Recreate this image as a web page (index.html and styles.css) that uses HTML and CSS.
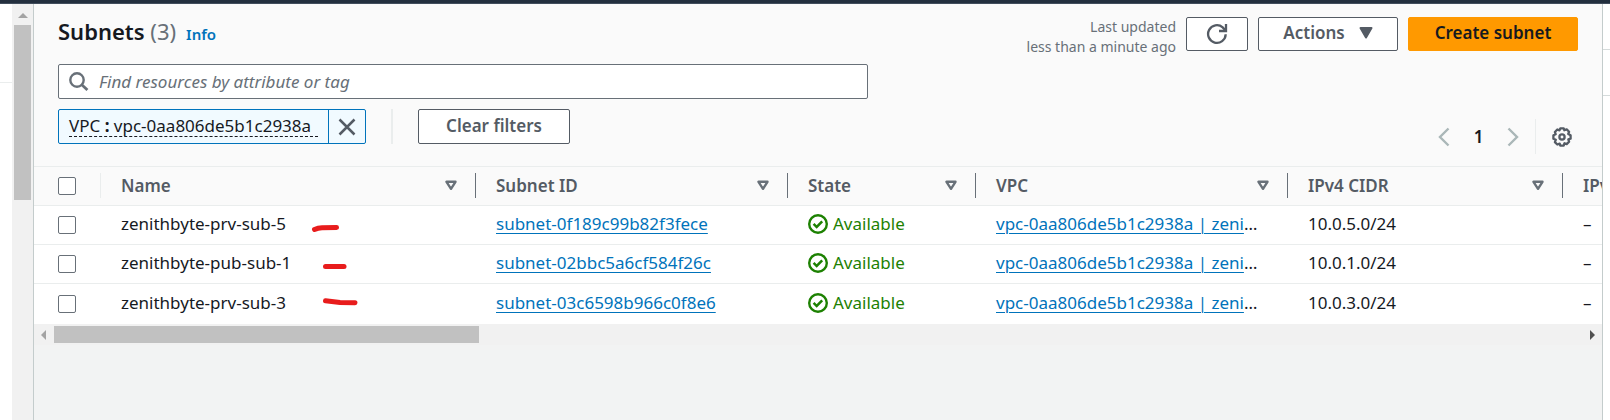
FILE: index.html
```html
<!DOCTYPE html>
<html lang="en">
<head>
<meta charset="utf-8">
<title>Subnets</title>
<link rel="stylesheet" href="styles.css">
</head>
<body>
<svg class="defs" aria-hidden="true">
  <symbol id="sort" viewBox="0 0 12 11"><path d="M1.500 1.800h9L6 8.800z" fill="none" stroke="currentColor" stroke-width="2.400" stroke-linejoin="round"/></symbol>
  <symbol id="ok" viewBox="0 0 20 20"><circle cx="10" cy="10" r="8.800" fill="none" stroke="currentColor" stroke-width="2.400"/><path d="M5.600 9.800l3.100 3.200 5.500-5.600" fill="none" stroke="currentColor" stroke-width="2.500"/></symbol>
</svg>
<div class="topbar"></div>
<div class="frame">
  <div class="left-page">
    <div class="left-strip"></div>
    <div class="vscroll">
      <svg class="arrow-up" viewBox="0 0 10 5"><path d="M0 5L5 0l5 5z"/></svg>
      <div class="vthumb"></div>
    </div>
  </div>
  <main class="panel">
    <header class="head">
      <div class="title-row">
        <h1 class="title">Subnets <span class="count">(3)</span></h1>
        <a class="info" href="#">Info</a>
        <div class="actions">
          <p class="updated">Last updated<br>less than a minute ago</p>
          <button class="btn btn-icon" aria-label="Refresh">
            <svg width="22" height="22" viewBox="0 0 22 22" fill="none" stroke="currentColor" stroke-width="2.300"><path d="M19.700 11.300a8.800 8.800 0 1 1-3-6.900l2.500 2.700"/><path d="M20 1v7h-7"/></svg>
          </button>
          <button class="btn btn-menu">Actions <svg width="14" height="12" viewBox="0 0 14 12"><path d="M1.500 1h11L7 10.500z" fill="currentColor" stroke="currentColor" stroke-width="2" stroke-linejoin="round"/></svg></button>
          <button class="btn btn-primary">Create subnet</button>
        </div>
      </div>
      <label class="search">
        <svg width="20" height="20" viewBox="0 0 20 20" fill="none" stroke="currentColor" stroke-width="2.400"><circle cx="8" cy="8" r="6.700"/><path d="M12.800 12.800l5.600 5.300" stroke-width="2.800"/></svg>
        <input type="text" aria-label="Find resources" placeholder="Find resources by attribute or tag">
      </label>
      <div class="filter-row">
        <div class="token">
          <button class="token-text"><span>VPC <b>:</b> vpc-0aa806de5b1c2938a</span></button>
          <button class="token-close" aria-label="Remove filter"><svg width="18" height="18" viewBox="0 0 18 18" fill="none" stroke="currentColor" stroke-width="2.500"><path d="M1.500 1.500l15 15M16.500 1.500l-15 15"/></svg></button>
        </div>
        <div class="split"></div>
        <button class="btn btn-clear">Clear filters</button>
        <nav class="pages" aria-label="Pages">
          <button class="plain page-arrow" aria-label="Previous page"><svg width="12" height="20" viewBox="0 0 12 20" fill="none" stroke="currentColor" stroke-width="2.400"><path d="M10.500 1.500L2 10l8.500 8.500"/></svg></button>
          <button class="plain page-number">1</button>
          <button class="plain page-arrow" aria-label="Next page"><svg width="12" height="20" viewBox="0 0 12 20" fill="none" stroke="currentColor" stroke-width="2.400"><path d="M1.500 1.500L10 10l-8.500 8.500"/></svg></button>
          <div class="rule"></div>
          <button class="plain gear" aria-label="Preferences"><svg width="20" height="20" viewBox="0 0 20 20" fill="none" stroke="currentColor" stroke-width="2.300" stroke-linejoin="round"><path d="M8.300 1.300h3.400l.6 1.900 2.400-.8 2.400 2.400-.9 2.200 2.400 1.300v3.400l-2.300.6.8 2.400-2.400 2.400-2.200-.9-.8 2.400H8.300l-.6-2-2.400.9-2.400-2.400.9-2.300-2.400-1V8.300l2.300-1-.8-2.300 2.400-2.500 2.200.9z"/><circle cx="10" cy="10" r="2.600"/></svg></button>
        </nav>
      </div>
    </header>
    <div class="table-wrap">
      <table class="grid">
        <colgroup><col class="c-check"><col class="c-name"><col class="c-id"><col class="c-state"><col class="c-vpc"><col class="c-v4"><col class="c-v6"></colgroup>
        <thead>
          <tr>
            <th><div class="th th-check"><input type="checkbox" aria-label="Select all"></div></th>
            <th><div class="th">Name<svg class="sort"><use href="#sort"/></svg></div></th>
            <th><div class="th">Subnet ID<svg class="sort"><use href="#sort"/></svg></div></th>
            <th><div class="th">State<svg class="sort"><use href="#sort"/></svg></div></th>
            <th><div class="th">VPC<svg class="sort"><use href="#sort"/></svg></div></th>
            <th><div class="th">IPv4 CIDR<svg class="sort"><use href="#sort"/></svg></div></th>
            <th><div class="th">IPv6</div></th>
          </tr>
        </thead>
        <tbody>
          <tr>
            <td><input type="checkbox" aria-label="Select zenithbyte-prv-sub-5"></td>
            <td>zenithbyte-prv-sub-5<svg class="mark" viewBox="0 0 60 20"><path d="M7.500 11.500Q11 9.800 15 9.700L29.500 9.400"/></svg></td>
            <td><a href="#">subnet-0f189c99b82f3fece</a></td>
            <td><span class="state"><svg><use href="#ok"/></svg>Available</span></td>
            <td><a href="#">vpc-0aa806de5b1c2938a | zeni</a>…</td>
            <td>10.0.5.0/24</td>
            <td>–</td>
          </tr>
          <tr>
            <td><input type="checkbox" aria-label="Select zenithbyte-pub-sub-1"></td>
            <td>zenithbyte-pub-sub-1<svg class="mark" viewBox="0 0 60 20"><path d="M18.500 9.500H37"/></svg></td>
            <td><a href="#">subnet-02bbc5a6cf584f26c</a></td>
            <td><span class="state"><svg><use href="#ok"/></svg>Available</span></td>
            <td><a href="#">vpc-0aa806de5b1c2938a | zeni</a>…</td>
            <td>10.0.1.0/24</td>
            <td>–</td>
          </tr>
          <tr>
            <td><input type="checkbox" aria-label="Select zenithbyte-prv-sub-3"></td>
            <td>zenithbyte-prv-sub-3<svg class="mark" viewBox="0 0 60 20"><path d="M18.500 4.800L33 6.500l15 .3"/></svg></td>
            <td><a href="#">subnet-03c6598b966c0f8e6</a></td>
            <td><span class="state"><svg><use href="#ok"/></svg>Available</span></td>
            <td><a href="#">vpc-0aa806de5b1c2938a | zeni</a>…</td>
            <td>10.0.3.0/24</td>
            <td>–</td>
          </tr>
        </tbody>
      </table>
    </div>
    <div class="hscroll">
      <svg class="arrow-left" viewBox="0 0 5 10"><path d="M5 0L0 5l5 5z"/></svg>
      <div class="htrack"><div class="hthumb"></div></div>
      <svg class="arrow-right" viewBox="0 0 5 10"><path d="M0 0l5 5-5 5z"/></svg>
    </div>
  </main>
  <div class="right-page"><div class="right-row"></div><div class="right-row"></div></div>
</div>
</body>
</html>
```
FILE: styles.css
```css
* { box-sizing: border-box; }
body {
  margin: 0;
  height: 100vh;
  display: flex;
  flex-direction: column;
  overflow: hidden;
  background: #fff;
  color: #16191f;
  font: 17px/22px "Noto Sans", "Open Sans", sans-serif;
}
button, input { font: inherit; color: inherit; margin: 0; }
.defs { position: absolute; width: 0; height: 0; }
.topbar { height: 4px; flex: none; background: #232f3e; border-bottom: 1px solid #414d5c; }
.frame { flex: 1; display: grid; grid-template-columns: 33px minmax(0, 1fr) 7px; }

.left-page { display: flex; }
.left-strip { width: 12px; height: 79px; border-bottom: 1px solid #eaeded; }
.vscroll { width: 21px; background: #f1f1f1; display: flex; flex-direction: column; align-items: center; padding-top: 9px; }
.arrow-up { width: 10px; height: 5px; fill: #a3a3a3; }
.vthumb { width: 17px; height: 175px; margin-top: 7px; background: #c1c1c1; }
.right-row { height: 46px; border-bottom: 1px solid #d5dbdb; }

.panel { background: #f2f3f3; border: solid #c4cccc; border-width: 0 1px; }
.head { background: #fafafa; padding: 13px 24px 12px; border-bottom: 1px solid #eaeded; }
.title-row { display: flex; align-items: flex-start; height: 47px; }
.title { margin: 0; font-size: 22px; line-height: 28px; font-weight: 600; }
.count { font-weight: 400; color: #687078; }
.info { margin: 7px 0 0 10px; font-size: 15px; line-height: 20px; font-weight: 600; color: #0073bb; text-decoration: none; }
.actions { margin-left: auto; display: flex; gap: 10px; }
.updated { margin: 0; font-size: 14px; line-height: 20px; color: #687078; text-align: right; }
.btn {
  height: 34px;
  display: flex;
  align-items: center;
  justify-content: center;
  gap: 12px;
  padding: 0 0 2px;
  background: #fff;
  border: 1px solid #545b64;
  border-radius: 2px;
  color: #545b64;
  font-weight: 600;
  white-space: nowrap;
}
.btn-icon { width: 62px; padding: 0; }
.btn-menu { width: 140px; gap: 14px; }
.btn-primary { width: 170px; background: #ff9900; border-color: #ff9900; color: #16191f; }
.btn-clear { width: 152px; height: 35px; }

.search {
  display: flex;
  align-items: center;
  gap: 10px;
  max-width: 810px;
  height: 35px;
  padding: 0 10px;
  background: #fff;
  border: 1px solid #687078;
  border-radius: 2px;
  color: #687078;
}
.search input { flex: 1; border: 0; padding: 0; background: none; outline: 0; }
.search input::placeholder { color: #687078; font-style: italic; opacity: 1; }

.filter-row { display: flex; align-items: flex-start; margin-top: 10px; }
.token { display: flex; min-width: 308px; height: 35px; border: 1px solid #0073bb; border-radius: 2px; background: #f1faff; }
.token-text { flex: 1; border: 0; background: none; padding: 0 10px; display: flex; align-items: center; }
.token-text span { flex: 1; text-align: left; border-bottom: 1px dashed #16191f; line-height: 20px; }
.token-close { width: 37px; padding: 0; display: grid; place-items: center; border: 0; border-left: 1px solid #0073bb; background: none; color: #545b64; }
.split { width: 2px; height: 35px; margin: 0 25px; background: #eaeded; }
.pages { margin: 10px 6px 0 auto; height: 35px; display: flex; align-items: center; }
.plain { border: 0; padding: 0; background: none; display: grid; place-items: center; }
.page-arrow { width: 12px; color: #aab7b8; }
.page-number { width: 57px; font-weight: 600; }
.rule { width: 1px; height: 35px; margin: 0 16px; background: #eaeded; }
.gear { color: #545b64; }

.table-wrap { overflow: hidden; background: #fff; }
.grid { width: 1842px; table-layout: fixed; border-collapse: separate; border-spacing: 0; }
.c-check { width: 67px; }
.c-name { width: 375px; }
.c-id, .c-vpc { width: 312px; }
.c-state { width: 188px; }
.c-v4 { width: 275px; }
.c-v6 { width: 313px; }
.grid th { padding: 0; background: #fafafa; border-bottom: 1px solid #eaeded; text-align: left; color: #545b64; font-weight: 600; }
.th { display: flex; align-items: center; height: 25px; margin: 6px 0 7px; padding: 0 18px 0 20px; border-right: 1px solid #687078; }
.th-check { padding: 0 24px; border-right-color: #eaeded; }
.sort { width: 12px; height: 11px; margin-left: auto; color: #687078; }
.grid td { height: 39px; padding: 0 24px 2px 20px; border-bottom: 1px solid #eaeded; white-space: nowrap; }
.grid td:first-child { padding: 0 0 0 24px; }
.grid tr:last-child td { height: 40px; border-bottom-color: #fff; }
.grid input {
  appearance: none;
  display: block;
  width: 18px;
  height: 18px;
  background: #fff;
  border: 1px solid #687078;
  border-radius: 2px;
}
.grid a { color: #0073bb; text-underline-offset: 3px; text-decoration-thickness: 1px; }
.grid td:nth-child(2) { position: relative; }
.mark { position: absolute; left: 206px; top: 12px; width: 60px; height: 20px; fill: none; stroke: #e81c1c; stroke-width: 5; stroke-linecap: round; }
.state { display: flex; align-items: center; gap: 5px; color: #1d8102; }
.state svg { width: 20px; height: 20px; }

.hscroll { height: 21px; display: flex; align-items: center; gap: 8px; padding: 0 7px; background: #f1f1f1; }
.arrow-left { width: 5px; height: 10px; fill: #a3a3a3; }
.arrow-right { width: 5px; height: 10px; fill: #505050; }
.htrack { flex: 1; }
.hthumb { width: 425px; height: 17px; background: #c1c1c1; }
```
